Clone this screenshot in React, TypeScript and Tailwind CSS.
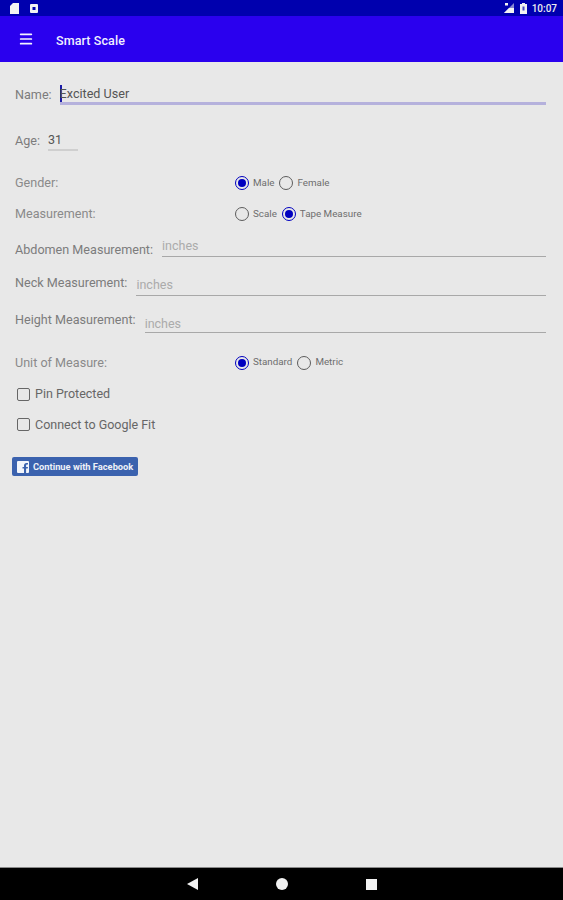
import React from 'react';
import { Menu } from 'lucide-react';

const FONT = "font-['Roboto',sans-serif]";

const Radio = ({ checked }: { checked?: boolean }) => (
  <span
    className={`flex h-[14px] w-[14px] shrink-0 items-center justify-center rounded-full border-[1.5px] ${
      checked ? 'border-[#0000c0]' : 'border-[#5c5c5c]'
    }`}
  >
    {checked && <span className="h-[8px] w-[8px] rounded-full bg-[#0000c0]" />}
  </span>
);

const RadioRow = ({ label, options, selected, rowClass }: { label: string; options: string[]; selected: number; rowClass: string }) => (
  <div className={`flex h-[19px] items-center ${rowClass}`}>
    <span className="w-[220px] text-[12.6px] text-[#8a8a8a]">{label}</span>
    <div className="-mt-[1px] flex items-center">
      {options.map((opt, i) => (
        <div key={opt} className="mr-[5px] flex items-center gap-[4px]">
          <Radio checked={i === selected} />
          <span className="text-[9.8px] text-[#6e6e6e]">{opt}</span>
        </div>
      ))}
    </div>
  </div>
);

const MeasureRow = ({ label, labelClass, hintClass, rowClass }: { label: string; labelClass: string; hintClass: string; rowClass: string }) => (
  <div className={`flex items-end ${rowClass}`}>
    <span className={`whitespace-nowrap text-[12.6px] text-[#7c7c7c] ${labelClass}`}>{label}</span>
    <div className="flex-1 border-b-[1.5px] border-[#a8a8a8]">
      <div className={`text-[12.5px] leading-[15px] text-[#ababab] ${hintClass}`}>inches</div>
    </div>
  </div>
);

const Check = ({ label, rowClass }: { label: string; rowClass: string }) => (
  <div className={`flex items-center gap-[5px] pl-[2px] ${rowClass}`}>
    <span className="h-[13px] w-[13px] rounded-[2px] border-[1.5px] border-[#666666]" />
    <span className="text-[12.5px] text-[#666666]">{label}</span>
  </div>
);

export default function App() {
  return (
    <div className={`flex h-[900px] flex-col bg-[#e8e8e8] ${FONT}`}>
      {/* status bar */}
      <div className="flex h-[16px] items-center justify-between bg-[#0000ae] pl-[10px] pr-[6px]">
        <div className="flex items-center gap-[11px]">
          <svg width="9" height="11" viewBox="0 0 9 11" fill="#f2f2f2">
            <path d="M3 0h6v11H0V3z" />
          </svg>
          <svg width="8" height="9" viewBox="0 0 8 9">
            <rect width="8" height="9" rx="1" fill="#f2f2f2" />
            <rect x="2.5" y="3" width="3" height="3" fill="#0000ae" />
          </svg>
        </div>
        <div className="flex items-center">
          <svg width="12" height="10" viewBox="0 0 12 10" fill="#f2f2f2">
            <path d="M11 0v10H1z" opacity="0.55" />
            <path d="M6 5h5v5H1z" />
            <path d="M2 0h3v2.500H2z" />
          </svg>
          <svg className="ml-[5px]" width="7" height="11" viewBox="0 0 7 11">
            <path d="M2 0h3v1h2v10H0V1h2z" fill="#f2f2f2" />
            <rect x="2.5" y="3.5" width="2" height="4" fill="#0000ae" opacity="0.7" />
          </svg>
          <span className="ml-[5px] text-[10px] font-medium text-[#eeeeee]">10:07</span>
        </div>
      </div>

      {/* toolbar */}
      <div className="flex h-[46px] items-center bg-[#2a00ee] pl-[18px]">
        <Menu size={16} strokeWidth={2.6} className="-mt-[1px] text-[#f4f4ff]" />
        <span className="ml-[22px] pt-[4px] text-[12.5px] font-medium tracking-[0.1px] text-[#f0f0ff]">Smart Scale</span>
      </div>

      {/* form */}
      <div className="flex flex-1 flex-col pl-[15px] pr-[17px]">
        <div className="mt-[22px] flex items-center">
          <span className="pt-[2px] text-[12.6px] text-[#7c7c7c]">Name:</span>
          <div className="ml-[8px] flex-1 border-b-[3px] border-[#b5b1dc]">
            <div className="flex h-[18px] items-center">
              <span className="h-[17px] w-[2px] bg-[#1a1aa8]" />
              <span className="-ml-[2px] pt-[3px] text-[12.6px] text-[#555555]">Excited User</span>
            </div>
          </div>
        </div>

        <div className="mt-[26px] flex items-center">
          <span className="text-[12.6px] text-[#7c7c7c]">Age:</span>
          <div className="ml-[8px] w-[30px] border-b-2 border-[#cfcfcf]">
            <div className="h-[18px] text-[12.5px] leading-[18px] text-[#555555]">31</div>
          </div>
        </div>

        <RadioRow rowClass="mt-[23px]" label="Gender:" options={['Male', 'Female']} selected={0} />
        <RadioRow rowClass="mt-[12px]" label="Measurement:" options={['Scale', 'Tape Measure']} selected={1} />

        <MeasureRow rowClass="mt-[14px]" labelClass="mr-[9px] -mb-[3px]" hintClass="pb-[3px]" label="Abdomen Measurement:" />
        <MeasureRow rowClass="mt-[17px]" labelClass="mr-[9px] mb-[3px]" hintClass="pb-[3px]" label="Neck Measurement:" />
        <MeasureRow rowClass="mt-[15px]" labelClass="mr-[9px] mb-[3px]" hintClass="pb-[1px]" label="Height Measurement:" />

        <RadioRow rowClass="mt-[21px]" label="Unit of Measure:" options={['Standard', 'Metric']} selected={0} />

        <Check rowClass="mt-[12px]" label="Pin Protected" />
        <Check rowClass="mt-[12px]" label="Connect to Google Fit" />

        <div className="-ml-[3px] mt-[23px] flex h-[19px] w-[126px] items-center rounded-[2px] bg-[#3b62ae] pl-[5px]">
          <span className="flex h-[12px] w-[12px] items-end justify-end overflow-hidden rounded-[1px] bg-[#f2f5fb]">
            <svg width="8" height="11" viewBox="0 0 8 11" fill="#3b62ae">
              <path d="M3 11V6.500H1.500V5H3V3.500C3 2 4 1 5.400 1H7v1.600H6c-.6 0-.9.3-.9.9V5H7l-.3 1.500H5.100V11z" />
            </svg>
          </span>
          <span className="ml-[4px] whitespace-nowrap text-[9.3px] font-bold text-[#eef1f8]">Continue with Facebook</span>
        </div>
      </div>

      {/* nav bar */}
      <div className="flex h-[33px] items-center justify-center gap-[78px] border-t border-[#8a8a8a] bg-black">
        <svg width="11" height="12" viewBox="0 0 11 12" fill="#f2f2f2">
          <path d="M11 0v12L0 6z" />
        </svg>
        <span className="h-[12px] w-[12px] rounded-full bg-[#f2f2f2]" />
        <span className="h-[11px] w-[11px] bg-[#f2f2f2]" />
      </div>
    </div>
  );
}
